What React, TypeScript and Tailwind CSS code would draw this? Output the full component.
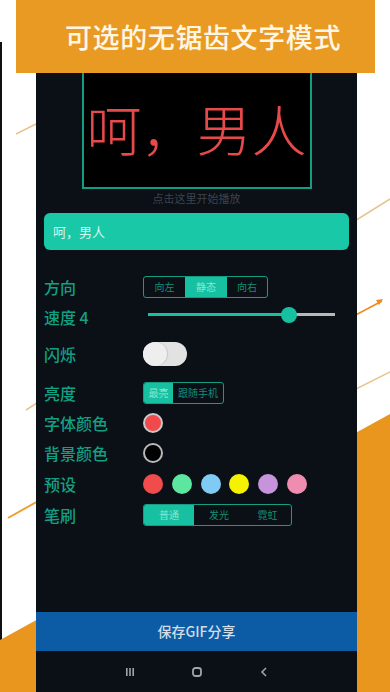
const Segmented = ({ items, active }: { items: { label: string; w: string }[]; active: number }) => {
    return (
        <div className="flex h-[22px] rounded-[3px] border border-[#139e83] overflow-hidden">
            {items.map((item, i) => (
                <div
                    key={item.label}
                    className={`${item.w} flex items-center justify-center text-[10px] leading-none ${
                        i === active ? "bg-[#17c0a0] text-[#8ce6d0]" : "text-[#138e76]"
                    }`}
                >
                    {item.label}
                </div>
            ))}
        </div>
    )
}

const Row = ({ label, h, children }: { label: string; h: string; children?: React.ReactNode }) => {
    return (
        <div className={`flex items-center pl-2 ${h}`}>
            <p className="w-[99px] text-[16px] font-medium text-[#12a084] leading-none">{label}</p>
            {children}
        </div>
    )
}

const presets = ["#f04c4c", "#5de6a0", "#7fcbf4", "#f5f200", "#c793dc", "#ef8db1"]

const Backdrop = () => (
    <svg className="absolute inset-0" width="390" height="692" viewBox="0 0 390 692">
        <rect x="0" y="42" width="2" height="598" fill="#111" />
        <polygon points="0,640 40,618 40,692 0,692" fill="#e9961f" />
        <polygon points="350,436 390,414 390,692 350,692" fill="#e9961f" />
        <line x1="16" y1="134" x2="40" y2="122" stroke="#e8c590" strokeWidth="1.5" />
        <line x1="350" y1="224" x2="390" y2="199" stroke="#e8c590" strokeWidth="1.5" />
        <line x1="350" y1="318" x2="382" y2="301" stroke="#f08a1a" strokeWidth="1.5" />
        <polygon points="383,299 376,300 379,305" fill="#f08a1a" />
        <line x1="350" y1="392" x2="390" y2="372" stroke="#e8c590" strokeWidth="1.5" />
        <line x1="26" y1="410" x2="40" y2="401" stroke="#e8c590" strokeWidth="1.5" />
        <line x1="8" y1="518" x2="40" y2="500" stroke="#f0a030" strokeWidth="2" />
    </svg>
)

export default function App() {
    return (
        <div className="relative w-[390px] h-[692px] overflow-hidden bg-white font-['Noto_Sans_CJK_SC','Noto_Sans',sans-serif]">
            <Backdrop />
            <div className="relative ml-[16px] w-[359px] h-[73px] bg-[#e99a22] flex items-center pl-[49px]">
                <p className="text-[27px] font-medium text-[#fff6e6] tracking-[0.6px] leading-none">
                    可选的无锯齿文字模式
                </p>
            </div>
            <div className="relative ml-[36px] w-[321px] h-[619px] bg-[#0b0f16] flex flex-col">
                <div className="mx-auto w-[230px] h-[116px] bg-black border-x-2 border-b-2 border-[#139e83] pt-[27px]">
                    <p className="text-[55px] font-light leading-none text-[#e84a4b] text-center">呵，男人</p>
                </div>
                <p className="mt-[2px] text-[11px] leading-[14px] text-[#3e434b] text-center">点击这里开始播放</p>
                <div className="mt-[8px] mx-2 h-[37px] rounded-[6px] bg-[#18c8a7] flex items-center pl-[9px]">
                    <p className="text-[13px] text-[#d9f6ef]">呵，男人</p>
                </div>

                <div className="mt-[22px] flex flex-col">
                    <Row label="方向" h="h-[30px]">
                        <Segmented
                            active={1}
                            items={[
                                { label: "向左", w: "w-[41px]" },
                                { label: "静态", w: "w-[42px]" },
                                { label: "向右", w: "w-[40px]" },
                            ]}
                        />
                    </Row>
                    <Row label="速度 4" h="h-[30px]">
                        <div className="relative ml-[5px] w-[187px] h-4 flex items-center -mt-[5px]">
                            <div className="h-[3px] w-[141px] bg-[#17c0a0]" />
                            <div className="h-[3px] flex-1 bg-[#b8b8b8]" />
                            <div className="absolute left-[133px] w-4 h-4 rounded-full bg-[#17c0a0]" />
                        </div>
                    </Row>
                    <Row label="闪烁" h="h-[44px]">
                        <div className="relative w-[44px] h-[24px] rounded-full bg-[#e2e2e2]">
                            <div className="absolute left-0 top-0 w-[24px] h-[24px] rounded-full bg-[#eeeeee] shadow-[1px_0_1px_rgba(0,0,0,0.12)]" />
                        </div>
                    </Row>
                    <Row label="亮度" h="h-[33px]">
                        <Segmented
                            active={0}
                            items={[
                                { label: "最亮", w: "w-[29px]" },
                                { label: "跟随手机", w: "w-[50px]" },
                            ]}
                        />
                    </Row>
                    <Row label="字体颜色" h="h-[28px]">
                        <div className="w-5 h-5 rounded-full bg-[#f04a4c] border-2 border-[#c9c9c9]" />
                    </Row>
                    <Row label="背景颜色" h="h-[32px]">
                        <div className="w-5 h-5 rounded-full bg-black border-2 border-[#b9b9b9]" />
                    </Row>
                    <Row label="预设" h="h-[30px]">
                        <div className="flex gap-[8.8px]">
                            {presets.map(c => (
                                <div key={c} className="w-5 h-5 rounded-full" style={{ backgroundColor: c }} />
                            ))}
                        </div>
                    </Row>
                    <Row label="笔刷" h="h-[31px]">
                        <Segmented
                            active={0}
                            items={[
                                { label: "普通", w: "w-[50px]" },
                                { label: "发光", w: "w-[50px]" },
                                { label: "霓虹", w: "w-[47px]" },
                            ]}
                        />
                    </Row>
                </div>

                <div className="flex-1" />
                <div className="h-[39px] bg-[#0b5ba5] flex items-center justify-center">
                    <p className="text-[14px] font-medium text-[#d3dde8]">保存GIF分享</p>
                </div>
                <div className="h-[41px] flex items-center justify-center gap-[58px] text-[#a0a4aa]">
                    <svg width="8" height="8" viewBox="0 0 8 8">
                        <rect x="0" y="0" width="1.6" height="8" fill="currentColor" />
                        <rect x="3.2" y="0" width="1.6" height="8" fill="currentColor" />
                        <rect x="6.4" y="0" width="1.6" height="8" fill="currentColor" />
                    </svg>
                    <svg width="10" height="10" viewBox="0 0 10 10">
                        <rect x="1" y="1" width="8" height="8" rx="2.5" fill="none" stroke="currentColor" strokeWidth="1.8" />
                    </svg>
                    <svg width="8" height="10" viewBox="0 0 8 10">
                        <path d="M6 1 L2 5 L6 9" fill="none" stroke="currentColor" strokeWidth="1.6" />
                    </svg>
                </div>
            </div>
        </div>
    )
}
